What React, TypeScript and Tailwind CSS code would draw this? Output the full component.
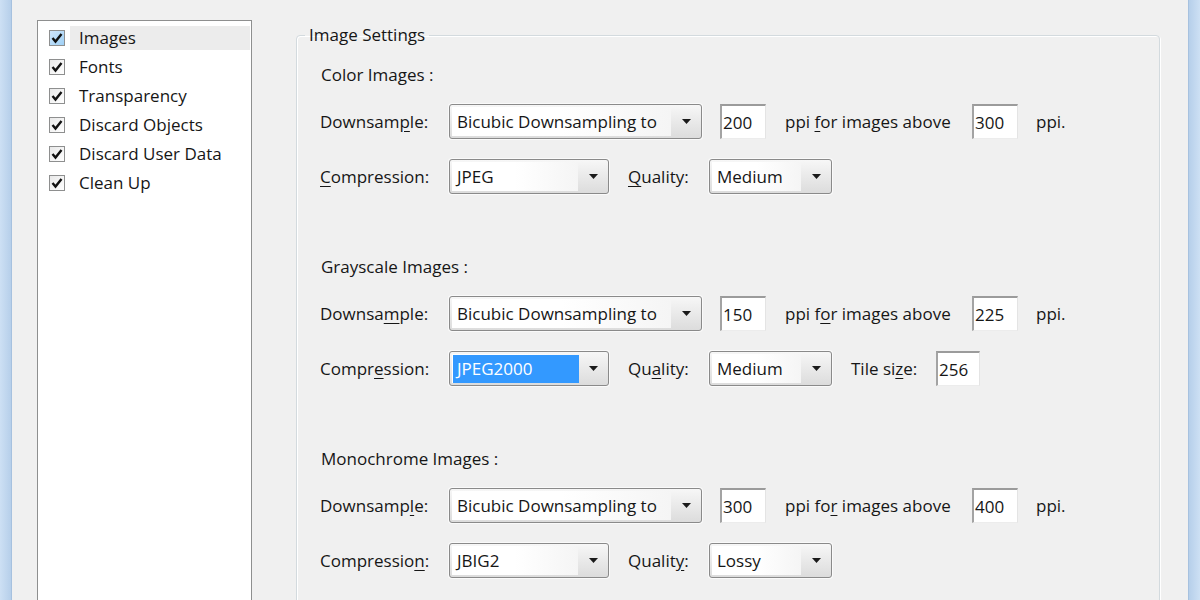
import React from 'react';

const items = ['Images', 'Fonts', 'Transparency', 'Discard Objects', 'Discard User Data', 'Clean Up'];

function Check({ hot }: { hot?: boolean }) {
  return (
    <span
      className={`flex h-[16px] w-[16px] shrink-0 items-center justify-center border border-[#8e8f8f] ${
        hot ? 'bg-gradient-to-br from-[#cfe6fb] to-[#9fd0f5]' : 'bg-gradient-to-br from-[#e9e9e9] to-[#ffffff]'
      }`}
    >
      <svg width="12" height="12" viewBox="0 0 12 12">
        <path d="M1.5 6 L4.5 9.5 L10.5 2" fill="none" stroke="#111" strokeWidth="2.4" />
      </svg>
    </span>
  );
}

function Dropdown({ value, w, selected }: { value: string; w: string; selected?: boolean }) {
  return (
    <div
      className={`${w} flex h-[35px] shrink-0 rounded-[3px] border border-[#8a8a8a] bg-gradient-to-b from-[#f7f7f7] to-[#dcdcdc] shadow-[0_0_0_1px_#fafafa]`}
    >
      <div className="my-[2px] ml-[2px] flex flex-1 items-center bg-gradient-to-r from-white via-white to-[#f5f5f5] pl-[1px]">
        <span
          className={`flex h-[28px] items-center px-[4px] ${selected ? 'w-[126px] bg-[#3399ff] text-white' : ''}`}
        >
          {value}
        </span>
      </div>
      <div className="flex w-[30px] items-center justify-center">
        <svg width="9" height="5" viewBox="0 0 9 5">
          <polygon points="0,0 9,0 4.5,5" fill="#1a1a1a" />
        </svg>
      </div>
    </div>
  );
}

function Field({ value, w }: { value: string; w: string }) {
  return (
    <div
      className={`${w} flex h-[35px] shrink-0 items-center border-t-2 border-l-2 border-r border-b border-t-[#9b9b9b] border-l-[#a3a3a3] border-r-[#e4e4e4] border-b-[#ececec] bg-white pl-[1px] leading-none`}
    >
      {value}
    </div>
  );
}

type Sec = {
  title: string;
  down: React.ReactNode;
  comp: React.ReactNode;
  qual: React.ReactNode;
  ppiFor: React.ReactNode;
  res: string;
  above: string;
  method: string;
  selected?: boolean;
  quality: string;
  tile?: string;
};

const sections: Sec[] = [
  {
    title: 'Color Images :',
    down: <>Downsam<u>p</u>le:</>,
    comp: <><u>C</u>ompression:</>,
    qual: <><u>Q</u>uality:</>,
    ppiFor: <>ppi <u>f</u>or images above</>,
    res: '200',
    above: '300',
    method: 'JPEG',
    quality: 'Medium',
  },
  {
    title: 'Grayscale Images :',
    down: <>Downsa<u>m</u>ple:</>,
    comp: <>Compr<u>e</u>ssion:</>,
    qual: <>Qu<u>a</u>lity:</>,
    ppiFor: <>ppi f<u>o</u>r images above</>,
    res: '150',
    above: '225',
    method: 'JPEG2000',
    selected: true,
    quality: 'Medium',
    tile: '256',
  },
  {
    title: 'Monochrome Images :',
    down: <>Downsamp<u>l</u>e:</>,
    comp: <>Compressio<u>n</u>:</>,
    qual: <>Qualit<u>y</u>:</>,
    ppiFor: <>ppi fo<u>r</u> images above</>,
    res: '300',
    above: '400',
    method: 'JBIG2',
    quality: 'Lossy',
  },
];

export default function App() {
  return (
    <div className="flex h-[600px] w-[1200px] overflow-hidden bg-[#f0f0f0] font-['Open_Sans','Noto_Sans',sans-serif] text-[17px] text-[#161616] [&_u]:underline-offset-[3px]">
      <div className="w-[12px] shrink-0 border-r border-[#a6c1df] bg-gradient-to-r from-[#cde0f4] to-[#b6cfea]" />

      <div className="ml-[25px] mt-[20px] h-[620px] w-[215px] shrink-0 border border-[#8e8f8f] bg-white pt-[2px]">
        {items.map((it, i) => (
          <div key={it} className="flex h-[29px] items-center pl-[11px] pr-[1px]">
            <Check hot={i === 0} />
            <div
              className={`ml-[5px] flex h-[24px] flex-1 items-center pl-[9px] ${i === 0 ? 'bg-[#ececec]' : ''}`}
            >
              {it}
            </div>
          </div>
        ))}
      </div>

      <fieldset className="ml-[44px] mt-[23px] h-[640px] w-[864px] shrink-0 rounded-[4px] border border-[#d3dade] shadow-[inset_1px_1px_0_#ffffff,1px_1px_0_#ffffff]">
        <legend className="ml-[8px] px-[4px] leading-[24px]">Image Settings</legend>
        <div className="pl-[23px] pt-[16px]">
          {sections.map((s) => (
            <div key={s.title} className="mb-[61px] flex flex-col">
              <div className="pl-[1px] leading-[24px]">{s.title}</div>
              <div className="mt-[17px] flex h-[35px] items-center">
                <span className="w-[129px] shrink-0">{s.down}</span>
                <Dropdown value="Bicubic Downsampling to" w="w-[253px]" />
                <div className="ml-[18px]">
                  <Field value={s.res} w="w-[46px]" />
                </div>
                <span className="ml-[19px] w-[187px] shrink-0">{s.ppiFor}</span>
                <Field value={s.above} w="w-[46px]" />
                <span className="ml-[18px]">ppi.</span>
              </div>
              <div className="mt-[20px] flex h-[35px] items-center">
                <span className="w-[129px] shrink-0">{s.comp}</span>
                <Dropdown value={s.method} w="w-[160px]" selected={s.selected} />
                <span className="ml-[19px] w-[81px] shrink-0">{s.qual}</span>
                <Dropdown value={s.quality} w="w-[123px]" />
                {s.tile && (
                  <>
                    <span className="ml-[19px] w-[85px] shrink-0">
                      Tile si<u>z</u>e:
                    </span>
                    <Field value={s.tile} w="w-[44px]" />
                  </>
                )}
              </div>
            </div>
          ))}
        </div>
      </fieldset>

      <div className="flex-1" />
      <div className="w-[12px] shrink-0 border-l border-[#a6c1df] bg-gradient-to-r from-[#b6cfea] to-[#cde0f4]" />
    </div>
  );
}
